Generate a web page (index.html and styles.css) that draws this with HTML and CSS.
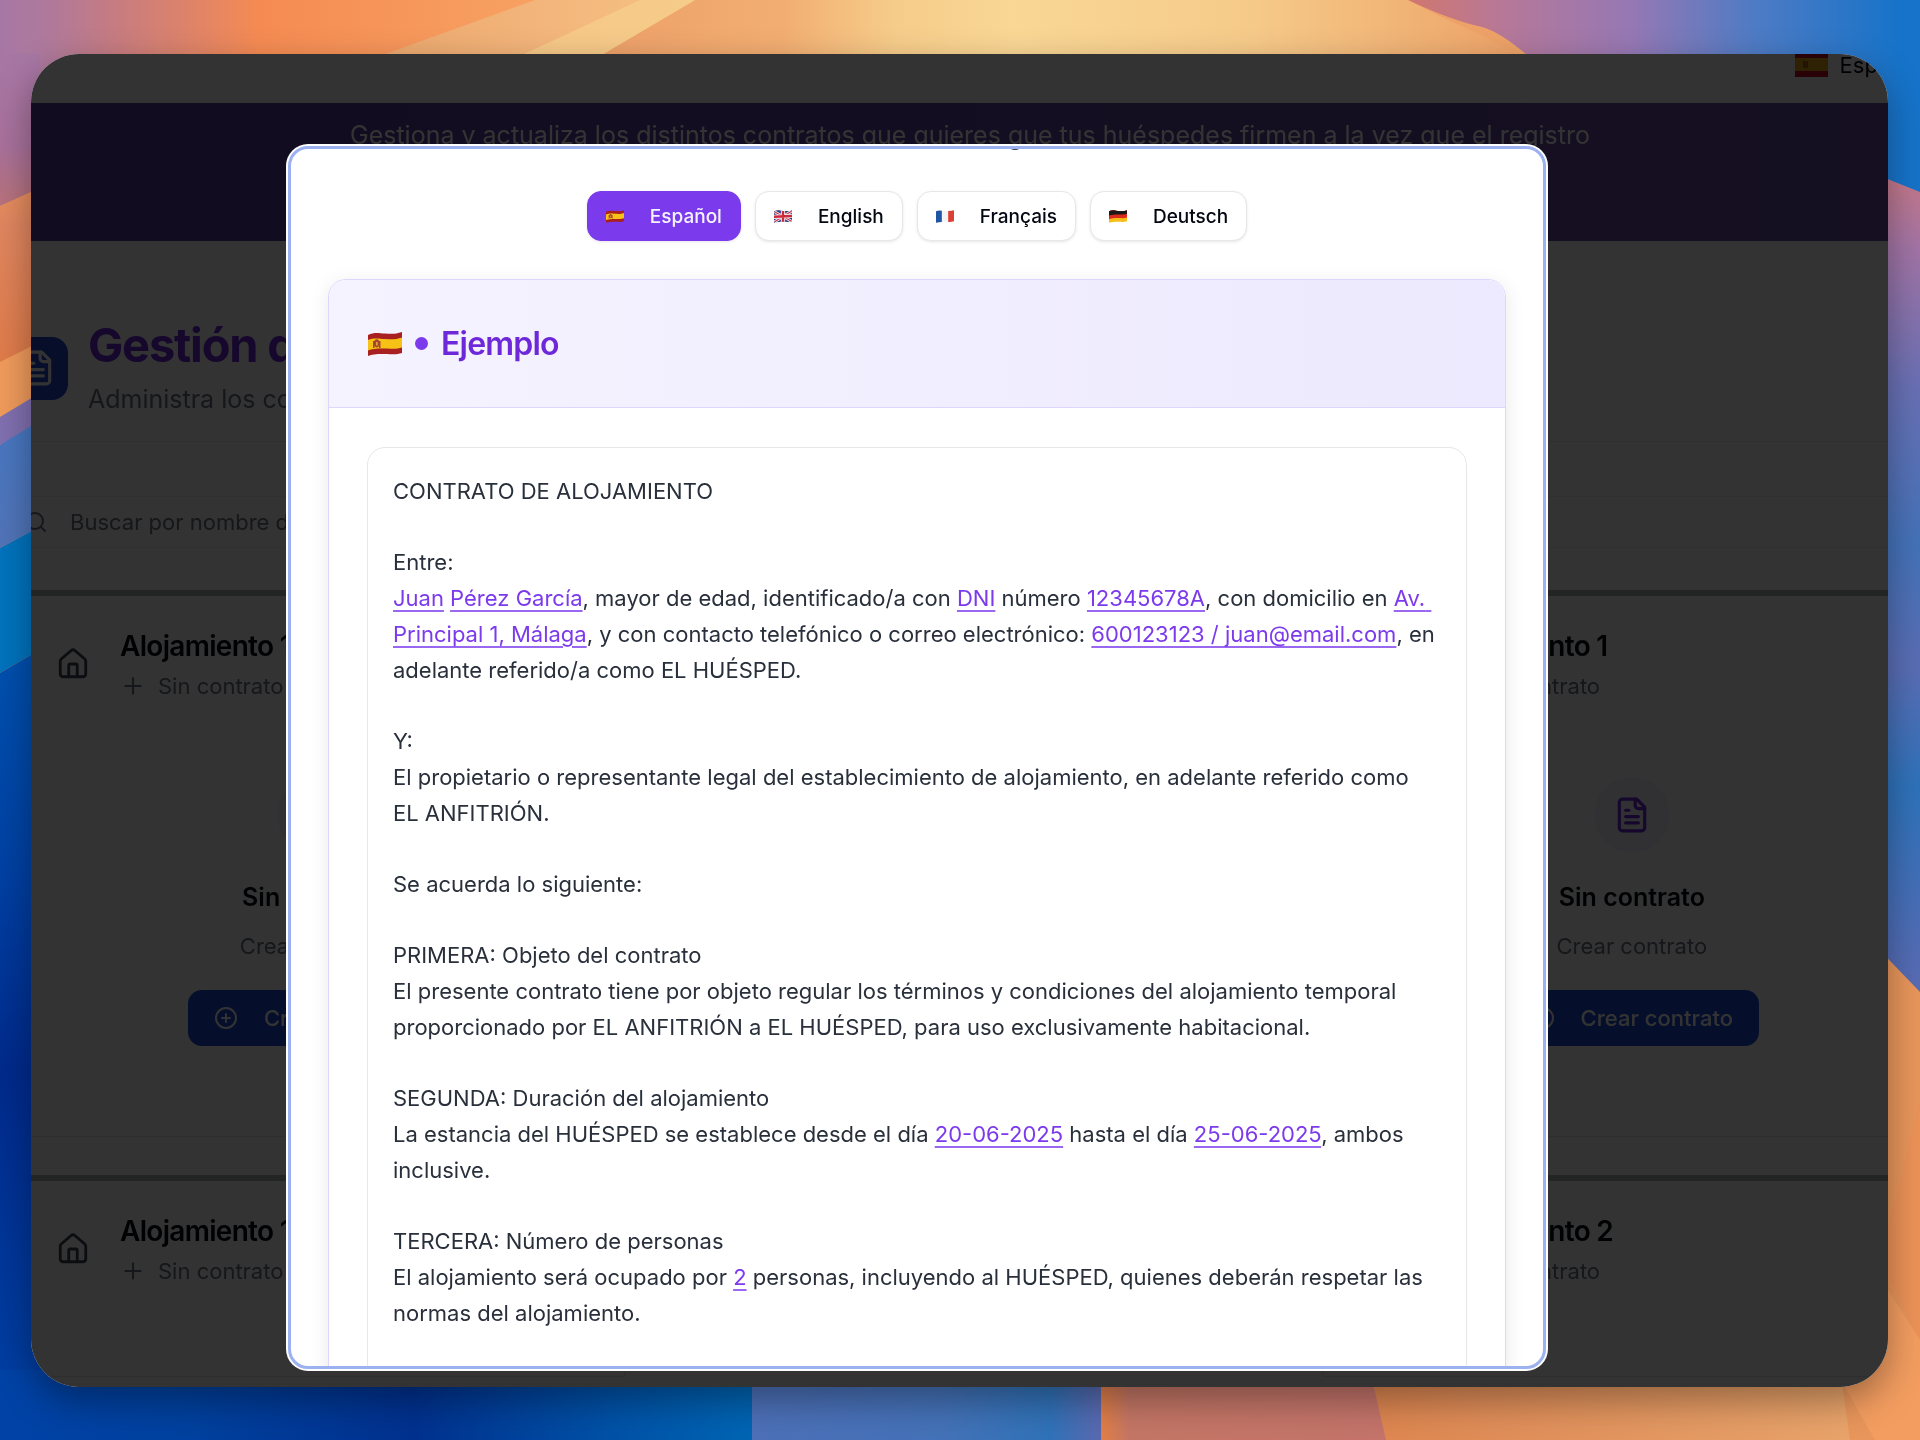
FILE: index.html
```html
<!DOCTYPE html>
<html lang="es">
<head>
    <meta charset="UTF-8">
    <title>Gestión de contratos</title>
    <link rel="stylesheet" href="styles.css">
</head>
<body>

    <!-- Shared icons and flags -->
    <svg class="sprite" aria-hidden="true">
        <symbol id="icon-file" viewBox="0 0 24 24">
            <path d="M15 2H6a2 2 0 0 0-2 2v16a2 2 0 0 0 2 2h12a2 2 0 0 0 2-2V7Z"/>
            <path d="M14 2v4a2 2 0 0 0 2 2h4"/>
            <path d="M10 9H8"/>
            <path d="M16 13H8"/>
            <path d="M16 17H8"/>
        </symbol>
        <symbol id="icon-house" viewBox="0 0 24 24">
            <path d="M15 21v-8a1 1 0 0 0-1-1h-4a1 1 0 0 0-1 1v8"/>
            <path d="M3 10a2 2 0 0 1 .709-1.528l7-5.999a2 2 0 0 1 2.582 0l7 5.999A2 2 0 0 1 21 10v9a2 2 0 0 1-2 2H5a2 2 0 0 1-2-2z"/>
        </symbol>
        <symbol id="icon-plus" viewBox="0 0 24 24">
            <path d="M5 12h14"/>
            <path d="M12 5v14"/>
        </symbol>
        <symbol id="icon-plus-circle" viewBox="0 0 24 24">
            <circle cx="12" cy="12" r="10"/>
            <path d="M8 12h8"/>
            <path d="M12 8v8"/>
        </symbol>
        <symbol id="icon-search" viewBox="0 0 24 24">
            <circle cx="11" cy="11" r="8"/>
            <path d="m21 21-4.3-4.3"/>
        </symbol>
        <symbol id="flag-es" viewBox="0 0 34 24">
            <path fill="#a8201f" d="M0 3C6 0 10 1 17 1.500S28 2 34 0V21C28 23 24 22 17 22S6 22 0 24Z"/>
            <path fill="#f6c215" d="M0 8C6 5.500 10 6.500 17 7S28 7.500 34 5.500V15.500C28 17.500 24 16.500 17 16.500S6 16.500 0 18.500Z"/>
            <path fill="#a8452a" d="M5 9h1.500v7H5zM11 9h1.500v7H11zM6.500 8.500q2.200-2.500 4.500 0V14q-2.200 3-4.500 0z"/>
            <path fill="#d9a441" d="M8 10h1.700v3.500H8z"/>
        </symbol>
        <symbol id="flag-gb" viewBox="0 0 34 24">
            <path fill="#2b3f85" d="M0 2C8 -1 10 1 17 1.500S28 2 34 0V21C28 23 24 22 17 22S6 22 0 24Z"/>
            <path stroke="#f1eef2" stroke-width="5" d="M1 3 33 21M1 22 33 2"/>
            <path stroke="#cc3344" stroke-width="2" d="M1 3 33 21M1 22 33 2"/>
            <path stroke="#f1eef2" stroke-width="8" d="M17 1.500V22M0 12.500 34 11"/>
            <path stroke="#cc2a3c" stroke-width="4.500" d="M17 1.500V22M0 12.500 34 11"/>
        </symbol>
        <symbol id="flag-fr" viewBox="0 0 34 24">
            <path fill="#f4f4f6" d="M0 2C8 -1 10 1 17 1.500S28 2 34 0V21C28 23 24 22 17 22S6 22 0 24Z"/>
            <path fill="#1f55a5" d="M0 2Q5 0 11 1V22.500Q6 22.500 0 24Z"/>
            <path fill="#dc4034" d="M23 1.700Q29 1.500 34 0V21Q29 22.500 23 22.200Z"/>
        </symbol>
        <symbol id="flag-de" viewBox="0 0 34 24">
            <path fill="#f5bf18" d="M0 2C8 -1 10 1 17 1.500S28 2 34 0V21C28 23 24 22 17 22S6 22 0 24Z"/>
            <path fill="#dc2a1c" d="M0 2C8 -1 10 1 17 1.500S28 2 34 0V14C28 16 24 15 17 15S6 15 0 17Z"/>
            <path fill="#1c1718" d="M0 2C8 -1 10 1 17 1.500S28 2 34 0V7C28 9 24 8 17 8S6 8 0 10Z"/>
        </symbol>
    </svg>

    <!-- Wallpaper -->
    <svg class="wallpaper" viewBox="0 0 1920 1440" preserveAspectRatio="none" aria-hidden="true">
        <defs>
            <linearGradient id="top" gradientUnits="userSpaceOnUse" x1="0" y1="0" x2="1530" y2="0">
                <stop offset="0" stop-color="#a777a4"/>
                <stop offset="0.030" stop-color="#ae799c"/>
                <stop offset="0.080" stop-color="#c97c7e"/>
                <stop offset="0.170" stop-color="#f58b53"/>
                <stop offset="0.340" stop-color="#f7a062"/>
                <stop offset="1" stop-color="#eda268"/>
            </linearGradient>
            <linearGradient id="ray" gradientUnits="userSpaceOnUse" x1="380" y1="0" x2="700" y2="0">
                <stop offset="0" stop-color="#eba86e"/>
                <stop offset="0.500" stop-color="#f3b57b"/>
                <stop offset="1" stop-color="#f6c384"/>
            </linearGradient>
            <linearGradient id="sun" gradientUnits="userSpaceOnUse" x1="600" y1="0" x2="1520" y2="0">
                <stop offset="0" stop-color="#eda069"/>
                <stop offset="0.200" stop-color="#f2ae72"/>
                <stop offset="0.320" stop-color="#f6cc8a"/>
                <stop offset="0.450" stop-color="#f9d795"/>
                <stop offset="0.700" stop-color="#f6cb8a"/>
                <stop offset="1" stop-color="#eda268"/>
            </linearGradient>
            <linearGradient id="sky" gradientUnits="userSpaceOnUse" x1="1410" y1="0" x2="1900" y2="0">
                <stop offset="0" stop-color="#d0776f"/>
                <stop offset="0.200" stop-color="#b5789a"/>
                <stop offset="0.450" stop-color="#9678b4"/>
                <stop offset="0.700" stop-color="#4f7bc4"/>
                <stop offset="1" stop-color="#1673c9"/>
            </linearGradient>
            <linearGradient id="left-top" x1="0" y1="0" x2="0" y2="1">
                <stop offset="0" stop-color="#a777a4"/>
                <stop offset="0.600" stop-color="#a8719c"/>
                <stop offset="1" stop-color="#b8727a"/>
            </linearGradient>
            <linearGradient id="left-orange" x1="0" y1="0" x2="0" y2="1">
                <stop offset="0" stop-color="#ee955c"/>
                <stop offset="0.300" stop-color="#e08660"/>
                <stop offset="1" stop-color="#df7b4a"/>
            </linearGradient>
            <linearGradient id="left-blue" x1="0" y1="0" x2="0" y2="1">
                <stop offset="0" stop-color="#4478c4"/>
                <stop offset="1" stop-color="#5274b8"/>
            </linearGradient>
            <linearGradient id="left-deep" x1="0" y1="0" x2="0" y2="1">
                <stop offset="0" stop-color="#0053b0"/>
                <stop offset="0.300" stop-color="#0041a4"/>
                <stop offset="0.550" stop-color="#002a8c"/>
                <stop offset="1" stop-color="#0042a6"/>
            </linearGradient>
            <linearGradient id="bottom-blue" gradientUnits="userSpaceOnUse" x1="0" y1="0" x2="752" y2="0">
                <stop offset="0" stop-color="#0042a6"/>
                <stop offset="0.250" stop-color="#00419f"/>
                <stop offset="0.550" stop-color="#00318f"/>
                <stop offset="0.800" stop-color="#0050a6"/>
                <stop offset="1" stop-color="#0065b4"/>
            </linearGradient>
            <linearGradient id="bottom-mid" x1="0" y1="0" x2="1" y2="0">
                <stop offset="0" stop-color="#4d70b8"/>
                <stop offset="0.550" stop-color="#4472b8"/>
                <stop offset="0.850" stop-color="#3072b8"/>
                <stop offset="1" stop-color="#5b69b0"/>
            </linearGradient>
            <linearGradient id="bottom-pink" x1="0" y1="0" x2="1" y2="0">
                <stop offset="0" stop-color="#e27f46"/>
                <stop offset="0.100" stop-color="#c47665"/>
                <stop offset="1" stop-color="#c4746b"/>
            </linearGradient>
            <linearGradient id="bottom-orange" x1="0" y1="0" x2="1" y2="0">
                <stop offset="0" stop-color="#de8650"/>
                <stop offset="0.200" stop-color="#e08d58"/>
                <stop offset="1" stop-color="#eaa86e"/>
            </linearGradient>
            <linearGradient id="right-mid" gradientUnits="userSpaceOnUse" x1="0" y1="180" x2="0" y2="990">
                <stop offset="0" stop-color="#c4788a"/>
                <stop offset="0.080" stop-color="#a374a4"/>
                <stop offset="0.250" stop-color="#6a70b4"/>
                <stop offset="0.450" stop-color="#4472b8"/>
                <stop offset="0.600" stop-color="#5a6db4"/>
                <stop offset="0.750" stop-color="#2e72ba"/>
                <stop offset="1" stop-color="#5a6bb4"/>
            </linearGradient>
        </defs>
        <rect width="1920" height="1440" fill="#e8965b"/>
        <path fill="url(#top)" d="M0 0H1540V120H0Z"/>
        <path fill="url(#sun)" d="M600 0H1408Q1450 22 1480 34 1500 46 1527 58H600Z"/>
        <path fill="url(#ray)" d="M535 0H695L600 56H380Z"/>
        <path fill="#f7d08d" d="M640 0H695L600 56H520Z" opacity="0.700"/>
        <path fill="url(#sky)" d="M1408 0H1920V200L1880 178V120H1600L1527 55Q1500 32 1482 27 1450 20 1408 0Z"/>
        <path fill="url(#left-top)" d="M0 54H40V190L0 206Z"/>
        <path fill="url(#left-orange)" d="M0 206 90 165V330L0 362Z"/>
        <path fill="#f09b5c" d="M0 362 90 317V365L0 417Z"/>
        <path fill="#8070b0" d="M0 417 90 363V400L0 445Z"/>
        <path fill="url(#left-blue)" d="M0 445 90 390V500L0 548Z"/>
        <path fill="#0073bd" d="M0 548 90 500V620L0 673Z"/>
        <path fill="url(#left-deep)" d="M0 673 90 620V1440H0Z"/>
        <path fill="url(#bottom-blue)" d="M0 1370H753V1440H0Z"/>
        <path fill="url(#bottom-mid)" d="M752 1370H1102V1440H752Z"/>
        <path fill="url(#bottom-pink)" d="M1101 1370H1390V1440H1101Z"/>
        <path fill="url(#bottom-orange)" d="M1370 1370H1920V1440H1386Z"/>
        <path fill="url(#right-mid)" d="M1870 172 1920 192V1000H1870Z"/>
        <path fill="#e8965b" d="M1870 940 1920 992V1440H1850L1840 1370Z"/>
        <path fill="#ef8f56" d="M1880 1260 1920 1340V1100Z" opacity="0.600"/>
        <path fill="#f39d60" d="M1835 1370 1875 1440H1920V1340L1888 1290Z"/>
    </svg>

    <div class="desktop">
        <div class="window">

            <div class="topbar">
                <button class="language" type="button">
                    <svg class="language-flag" viewBox="0 0 33 23" aria-hidden="true">
                        <path fill="#c60b1e" d="M0 0h33v23H0z"/>
                        <path fill="#e8a713" d="M0 4h33v13H0z"/>
                        <path fill="#ad6a15" d="M8 7h5v7H8z"/>
                    </svg>
                    Español
                </button>
            </div>

            <div class="banner">
                <p>Gestiona y actualiza los distintos contratos que quieres que tus huéspedes firmen a la vez que el registro</p>
            </div>

            <main class="page">
                <div class="page-header">
                    <div class="page-icon">
                        <svg class="icon"><use href="#icon-file"/></svg>
                    </div>
                    <div>
                        <h1>Gestión d</h1>
                        <p>Administra los co</p>
                    </div>
                </div>

                <label class="search">
                    <svg class="icon" aria-hidden="true"><use href="#icon-search"/></svg>
                    <input type="search" placeholder="Buscar por nombre d" aria-label="Buscar por nombre">
                </label>

                <div class="cards">
                    <section class="card">
                        <div class="card-header">
                            <svg class="icon icon-house"><use href="#icon-house"/></svg>
                            <div>
                                <h2>Alojamiento 1</h2>
                                <p class="status"><svg class="icon"><use href="#icon-plus"/></svg>Sin contrato</p>
                            </div>
                        </div>
                        <div class="empty">
                            <div class="empty-icon"><svg class="icon"><use href="#icon-file"/></svg></div>
                            <h3>Sin contrato</h3>
                            <p>Crear contrato</p>
                            <button class="create" type="button">
                                <svg class="icon"><use href="#icon-plus-circle"/></svg>
                                Crear contrato
                            </button>
                        </div>
                    </section>

                    <section class="card card-last">
                        <div class="card-header">
                            <svg class="icon icon-house"><use href="#icon-house"/></svg>
                            <div>
                                <h2>Alojamiento 1</h2>
                                <p class="status"><svg class="icon"><use href="#icon-plus"/></svg>Sin contrato</p>
                            </div>
                        </div>
                        <div class="empty">
                            <div class="empty-icon"><svg class="icon"><use href="#icon-file"/></svg></div>
                            <h3>Sin contrato</h3>
                            <p>Crear contrato</p>
                            <button class="create" type="button">
                                <svg class="icon"><use href="#icon-plus-circle"/></svg>
                                Crear contrato
                            </button>
                        </div>
                    </section>

                    <section class="card">
                        <div class="card-header">
                            <svg class="icon icon-house"><use href="#icon-house"/></svg>
                            <div>
                                <h2>Alojamiento 1</h2>
                                <p class="status"><svg class="icon"><use href="#icon-plus"/></svg>Sin contrato</p>
                            </div>
                        </div>
                    </section>

                    <section class="card card-last">
                        <div class="card-header">
                            <svg class="icon icon-house"><use href="#icon-house"/></svg>
                            <div>
                                <h2>Alojamiento 2</h2>
                                <p class="status"><svg class="icon"><use href="#icon-plus"/></svg>Sin contrato</p>
                            </div>
                        </div>
                    </section>
                </div>
            </main>

            <!-- Contract preview -->
            <div class="overlay">
                <div class="modal" role="dialog" aria-modal="true" aria-label="Ejemplo">
                    <p class="modal-title">g</p>

                    <div class="tabs">
                        <button class="tab active" type="button"><svg><use href="#flag-es"/></svg>Español</button>
                        <button class="tab" type="button"><svg><use href="#flag-gb"/></svg>English</button>
                        <button class="tab" type="button"><svg><use href="#flag-fr"/></svg>Français</button>
                        <button class="tab" type="button"><svg><use href="#flag-de"/></svg>Deutsch</button>
                    </div>

                    <article class="contract">
                        <header class="contract-header">
                            <svg class="contract-flag"><use href="#flag-es"/></svg>
                            <span class="dot"></span>
                            <h2>Ejemplo</h2>
                        </header>
                        <div class="contract-body">
                            <div class="contract-text">
                                <p>CONTRATO DE ALOJAMIENTO</p>
                                <p>Entre:<br><a href="#">Juan</a> <a href="#">Pérez García</a>, mayor de edad, identificado/a con <a href="#">DNI</a> número <a href="#">12345678A</a>, con domicilio en <a href="#">Av. Principal 1, Málaga</a>, y con contacto telefónico o correo electrónico: <a href="#">600123123 / juan@email.com</a>, en adelante referido/a como EL HUÉSPED.</p>
                                <p>Y:<br>El propietario o representante legal del establecimiento de alojamiento, en adelante referido como EL ANFITRIÓN.</p>
                                <p>Se acuerda lo siguiente:</p>
                                <p>PRIMERA: Objeto del contrato<br>El presente contrato tiene por objeto regular los términos y condiciones del alojamiento temporal proporcionado por EL ANFITRIÓN a EL HUÉSPED, para uso exclusivamente habitacional.</p>
                                <p>SEGUNDA: Duración del alojamiento<br>La estancia del HUÉSPED se establece desde el día <a href="#">20-06-2025</a> hasta el día <a href="#">25-06-2025</a>, ambos inclusive.</p>
                                <p>TERCERA: Número de personas<br>El alojamiento será ocupado por <a href="#">2</a> personas, incluyendo al HUÉSPED, quienes deberán respetar las normas del alojamiento.</p>
                            </div>
                        </div>
                    </article>
                </div>
            </div>

        </div>
    </div>

</body>
</html>
```

FILE: styles.css
```css
* {
    box-sizing: border-box;
}

body {
    margin: 0;
    font-family: 'Inter', sans-serif;
    font-size: 22px;
    color: #030712;
}

h1, h2, h3, p {
    margin: 0;
}

button {
    font-family: inherit;
    cursor: pointer;
}

.sprite {
    display: block;
    width: 0;
    height: 0;
}

.wallpaper {
    position: fixed;
    top: 0;
    left: 0;
    width: 100%;
    height: 100%;
}

.icon {
    flex: none;
    width: 24px;
    height: 24px;
    fill: none;
    stroke: currentColor;
    stroke-width: 2;
    stroke-linecap: round;
    stroke-linejoin: round;
}

.desktop {
    position: relative;
    display: flex;
    height: 100vh;
    padding: 54px 32px 53px 31px;
}

.window {
    position: relative;
    flex: 1;
    min-width: 0;
    overflow: hidden;
    background-color: #fff;
    border-radius: 48px;
    box-shadow: 0 14px 36px rgba(0, 0, 0, 0.35);
}

/* Page behind the modal */
.topbar {
    display: flex;
    justify-content: flex-end;
    height: 49px;
    margin-right: -56px;
}

.language {
    display: flex;
    align-items: flex-start;
    gap: 12px;
    padding: 0 22px 0 0;
    border: none;
    background: none;
    font-size: 22px;
    line-height: 22px;
    color: #030712;
}

.language-flag {
    width: 33px;
    height: 23px;
}

.banner {
    height: 138px;
    padding-top: 14px;
    background: linear-gradient(90deg, #553ca0, #6d4da8);
    color: #fff;
    font-size: 25px;
    line-height: 36px;
}

.banner p {
    margin-left: 319px;
    white-space: nowrap;
}

.page {
    margin: 0 -54px 0 -26px;
    padding-top: 78px;
}

.page-header {
    display: flex;
    align-items: center;
    gap: 20px;
    padding-bottom: 24px;
    border-bottom: 1px solid #e5e7eb;
}

.page-icon {
    display: flex;
    align-items: center;
    justify-content: center;
    width: 63px;
    height: 63px;
    border-radius: 16px;
    background-color: #2547d0;
    color: #fff;
}

.page-icon .icon {
    width: 38px;
    height: 38px;
}

.page-header h1 {
    margin-bottom: 10px;
    font-size: 47px;
    line-height: 52px;
    letter-spacing: -0.025em;
    color: #6d28d9;
}

.page-header p {
    font-size: 25px;
    line-height: 36px;
    color: #6b7280;
}

.search {
    display: flex;
    align-items: center;
    gap: 22px;
    height: 52px;
    margin-top: 54px;
    padding-left: 18px;
    border: 1px solid #f0f1f3;
    border-radius: 14px;
    color: #6b7280;
}

.search input {
    flex: 1;
    padding: 0;
    border: none;
    outline: none;
    background: none;
    font-family: inherit;
    font-size: 22px;
}

.search input::placeholder {
    color: #6b7280;
    opacity: 1;
}

.cards {
    display: grid;
    grid-template-columns: repeat(3, 1fr);
    gap: 38px;
    margin-top: 42px;
}

.card {
    border: 1px solid #e5e7eb;
    border-top: 6px solid #b0b6b3;
    padding: 31px 0 90px;
}

.card-last {
    grid-column: 3;
}

.card-header {
    display: flex;
    align-items: center;
    gap: 30px;
    padding-left: 50px;
}

.icon-house {
    width: 34px;
    height: 34px;
    color: #374151;
}

.card h2 {
    font-size: 28px;
    font-weight: 600;
    line-height: 38px;
    letter-spacing: -0.025em;
}

.status {
    display: flex;
    align-items: center;
    gap: 12px;
    margin-top: 6px;
    line-height: 30px;
    color: #6b7280;
}

.status .icon {
    width: 26px;
    height: 26px;
}

.empty {
    display: flex;
    flex-direction: column;
    align-items: center;
    margin-top: 76px;
    line-height: 32px;
}

.empty-icon {
    display: flex;
    align-items: center;
    justify-content: center;
    width: 76px;
    height: 76px;
    border-radius: 50%;
    background-color: #f3eeff;
    color: #6d28d9;
}

.empty-icon .icon {
    width: 38px;
    height: 38px;
}

.empty h3 {
    margin-top: 28px;
    font-size: 25px;
    font-weight: 600;
}

.empty p {
    margin-top: 17px;
    color: #6b7280;
}

.create {
    display: flex;
    align-items: center;
    gap: 26px;
    height: 56px;
    margin-top: 28px;
    padding: 0 26px;
    border: none;
    border-radius: 14px;
    background-color: #1d4ed8;
    color: #fff;
    font-size: 22px;
    font-weight: 500;
}

/* Modal */
.overlay {
    position: absolute;
    inset: 0;
    display: flex;
    padding: 92px 342px 18px 257px;
    background-color: rgba(0, 0, 0, 0.8);
}

.modal {
    flex: 1;
    min-width: 0;
    overflow: hidden;
    padding: 0 37px;
    border: 3px solid #9bb1f0;
    border-radius: 20px;
    background-color: #fff;
    box-shadow: 0 0 0 2px #fff;
}

.modal-title {
    margin-top: -32px;
    padding-left: 196px;
    font-size: 26px;
    line-height: 36px;
    text-align: center;
    color: #374151;
}

.tabs {
    display: flex;
    justify-content: center;
    gap: 14px;
    margin-top: 38px;
}

.tab {
    display: flex;
    align-items: center;
    gap: 26px;
    height: 50px;
    padding: 0 18px;
    border: 1px solid #e5e7eb;
    border-radius: 14px;
    background-color: #fff;
    box-shadow: 0 1px 3px rgba(0, 0, 0, 0.1);
    color: #030712;
    font-size: 19px;
    font-weight: 500;
}

.tab svg {
    width: 18px;
    height: 13px;
}

.tab.active {
    border-color: #7c3aed;
    background-color: #7c3aed;
    color: #f5f3ff;
}

.contract {
    margin-top: 38px;
    border: 1px solid #ddd6fe;
    border-radius: 18px;
    box-shadow: 0 4px 20px rgba(0, 0, 0, 0.09);
}

.contract-header {
    display: flex;
    align-items: center;
    gap: 13px;
    height: 128px;
    padding: 0 39px;
    border-bottom: 1px solid #ddd6fe;
    border-radius: 18px 18px 0 0;
    background: linear-gradient(90deg, #f5f3ff, #ede9fe);
}

.contract-flag {
    width: 34px;
    height: 26px;
}

.dot {
    width: 13px;
    height: 13px;
    border-radius: 50%;
    background-color: #7c3aed;
}

.contract-header h2 {
    font-size: 32px;
    font-weight: 600;
    letter-spacing: -0.025em;
    color: #6d28d9;
}

.contract-body {
    padding: 39px 38px;
}

.contract-text {
    display: flex;
    flex-direction: column;
    gap: 35px;
    padding: 25px 30px 80px 25px;
    border: 1px solid #e5e7eb;
    border-radius: 18px;
    line-height: 36px;
    color: #29303b;
    white-space: pre-wrap;
}

.contract-text a {
    color: #7c3aed;
    text-decoration: underline;
    text-decoration-thickness: 2px;
    text-decoration-color: #9a68f0;
    text-underline-offset: 4px;
}
```
